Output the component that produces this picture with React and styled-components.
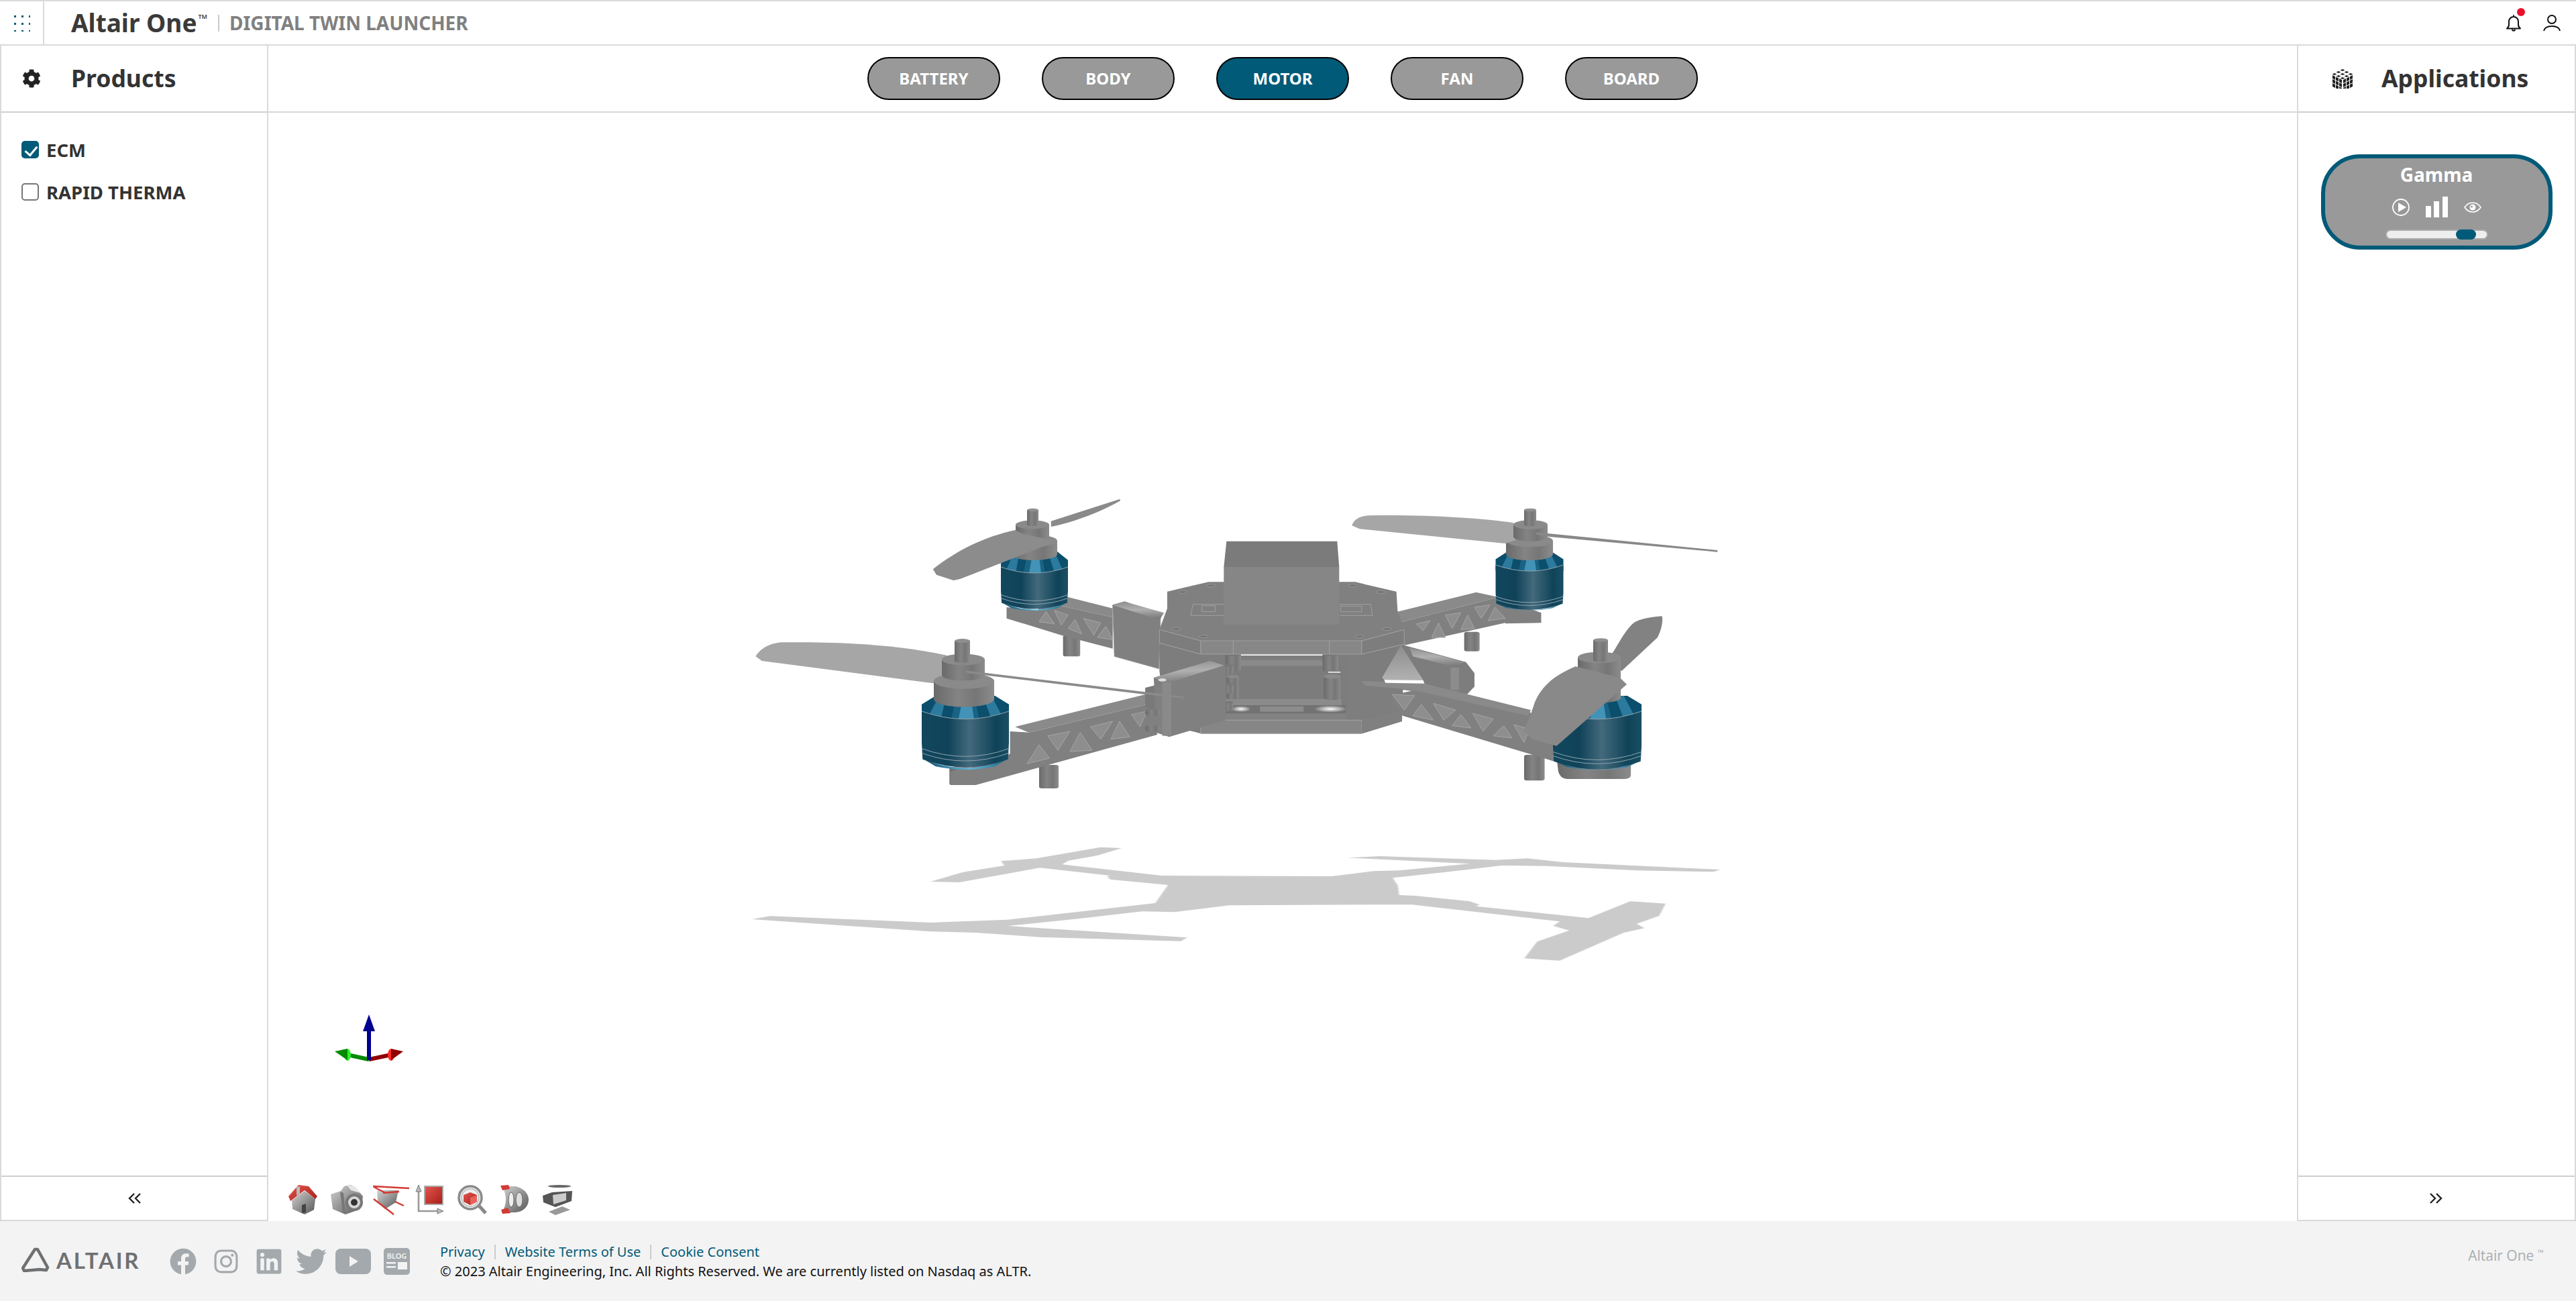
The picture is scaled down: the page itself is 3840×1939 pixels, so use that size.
import React from 'react';
import styled, { createGlobalStyle } from 'styled-components';
import { FaCog, FaFacebook, FaInstagram, FaLinkedin, FaTwitter } from 'react-icons/fa';

const TEAL = '#005a78';
const LINE = '#d8dadc';

const GlobalStyle = createGlobalStyle`
  html, body, #root { margin: 0; height: 100%; }
  body { font-family: "Noto Sans", "Open Sans", sans-serif; color: #333; background: #fff; }
  * { box-sizing: border-box; }
`;

const Page = styled.div`
  display: flex;
  flex-direction: column;
  height: 100vh;
  overflow: hidden;
`;

const TopBar = styled.header`
  display: flex;
  align-items: center;
  height: 68px;
  flex: none;
  border-top: 2px solid ${LINE};
  border-bottom: 2px solid ${LINE};
`;

const GridCell = styled.div`
  width: 66px;
  height: 100%;
  display: flex;
  align-items: center;
  padding-left: 19px;
  border-right: 2px solid ${LINE};
`;

const Brand = styled.div`
  margin-left: 40px;
  font-size: 37px;
  font-weight: 700;
  line-height: 1;
  color: #3a3a3a;
  position: relative;
  top: -1px;
`;

const Tm = styled.sup`
  font-size: 9px;
  font-weight: 600;
  vertical-align: 20px;
  line-height: 0;
  margin-left: 2px;
`;

const BrandRule = styled.div`
  width: 2px;
  height: 25px;
  margin: 0 15px 0 16px;
  background: #c9c9c9;
`;

const AppName = styled.div`
  font-size: 28px;
  font-weight: 700;
  color: #808080;
  white-space: nowrap;
`;

const TopActions = styled.div`
  margin-left: auto;
  display: flex;
  align-items: center;
  gap: 33px;
  padding-right: 23px;
`;

const BellWrap = styled.div`
  position: relative;
  display: flex;
`;

const RedDot = styled.span`
  position: absolute;
  right: -6px;
  top: -10px;
  width: 12px;
  height: 12px;
  border-radius: 50%;
  background: #e8112d;
`;

const Main = styled.main`
  flex: 1;
  display: flex;
  min-height: 0;
`;

const SidePanel = styled.aside`
  flex: none;
  width: ${p => p.$width}px;
  display: flex;
  flex-direction: column;
  border: 2px solid ${LINE};
  border-top: 0;
`;

const PanelHeader = styled.div`
  height: 100px;
  flex: none;
  display: flex;
  align-items: center;
  padding-left: ${p => p.$pad}px;
  border-bottom: 2px solid #cfcfcf;
`;

const PanelIcon = styled.div`
  width: 73px;
  display: flex;
  align-items: center;
  color: #222;
`;

const PanelTitle = styled.h2`
  margin: 0;
  font-size: 35.5px;
  font-weight: 700;
  line-height: 1;
  color: #333;
`;

const PanelBody = styled.div`
  flex: 1;
  display: flex;
  flex-direction: column;
  padding: ${p => p.$top}px 30px 0;
  gap: 37px;
`;

const CheckRow = styled.label`
  display: flex;
  align-items: center;
  height: 26px;
  gap: 11px;
  font-size: 27.5px;
  font-weight: 700;
  color: #333;
`;

const Check = styled.input`
  appearance: none;
  position: relative;
  width: 26px;
  height: 26px;
  margin: 0;
  border: 2px solid #777;
  border-radius: 5px;
  background: #fff;
  &:checked {
    border: 0;
    background: ${TEAL};
  }
  &:checked::after {
    content: '';
    position: absolute;
    left: 9px;
    top: 4px;
    width: 8px;
    height: 15px;
    border: solid #fff;
    border-width: 0 3px 3px 0;
    transform: rotate(40deg);
  }
`;

const PanelFoot = styled.div`
  height: 66px;
  flex: none;
  display: flex;
  align-items: center;
  justify-content: center;
  border-top: 2px solid #cfcfcf;
`;

const Center = styled.section`
  flex: 1;
  min-width: 0;
  display: flex;
  flex-direction: column;
`;

const PartsBar = styled.nav`
  height: 100px;
  flex: none;
  display: flex;
  align-items: center;
  justify-content: center;
  gap: 62px;
  border-bottom: 2px solid #d8d8d8;
`;

const PartButton = styled.button`
  width: 198px;
  height: 64px;
  padding: 0 0 2px;
  border: 2px solid #000;
  border-radius: 32px;
  background: ${p => (p.$active ? TEAL : '#999')};
  color: #fff;
  font-family: inherit;
  font-size: 24px;
  font-weight: 700;
`;

const Viewer = styled.div`
  flex: 1;
  position: relative;
  min-height: 0;
`;

const Scene = styled.svg`
  position: absolute;
  inset: 0;
  width: 100%;
  height: 100%;
`;

const ViewTools = styled.div`
  position: absolute;
  left: 30px;
  bottom: 7px;
  display: flex;
  filter: blur(0.5px);
`;

const ToolIcon = styled.svg`
  width: 63px;
  height: 48px;
  display: block;
`;

const AppCard = styled.div`
  width: 345px;
  height: 142px;
  align-self: center;
  display: flex;
  flex-direction: column;
  align-items: center;
  border: 6px solid ${TEAL};
  border-radius: 58px;
  background: #999;
  padding-top: 5px;
`;

const AppTitle = styled.div`
  font-size: 28px;
  line-height: 38px;
  font-weight: 700;
  color: #fff;
`;

const AppIcons = styled.div`
  display: flex;
  align-items: center;
  gap: 24px;
  height: 31px;
  margin-top: 14px;
`;

const Slider = styled.div`
  position: relative;
  flex: none;
  width: 153px;
  height: 15px;
  margin-top: 18px;
  border: 2px solid #aaa;
  border-radius: 8px;
  background: #eee;
`;

const SliderThumb = styled.div`
  position: absolute;
  left: 103px;
  top: -2px;
  width: 30px;
  height: 15px;
  border-radius: 8px;
  background: ${TEAL};
`;

const Footer = styled.footer`
  height: 119px;
  flex: none;
  display: flex;
  align-items: flex-start;
  padding: 35px 48px 0 32px;
  background: #f3f3f3;
`;

const LogoBlock = styled.div`
  width: 221px;
  display: flex;
  align-items: center;
  gap: 10px;
  margin-top: 4px;
`;

const LogoWord = styled.span`
  font-family: Lato, "Noto Sans", sans-serif;
  font-size: 33px;
  line-height: 36px;
  font-weight: 700;
  letter-spacing: 2.8px;
  color: #6f7072;
`;

const Socials = styled.div`
  display: flex;
  align-items: center;
  width: 403px;
  height: 40px;
  margin-top: 5px;
  color: #a3a9ac;
`;

const SocialSlot = styled.a`
  width: ${p => p.$w}px;
  flex: none;
  display: flex;
  align-items: center;
`;

const LegalBlock = styled.div`
  font-size: 20px;
  line-height: 24px;
  color: #111;
`;

const LinkRow = styled.div`
  display: flex;
  height: 22px;
  margin-bottom: 6px;
`;

const LegalLink = styled.a`
  color: ${TEAL};
  line-height: 22px;
  padding-right: 14px;
  margin-right: 14px;
  border-right: 2px solid #ccc;
  &:last-child { border: 0; margin: 0; padding: 0; }
`;

const Edition = styled.div`
  margin-left: auto;
  margin-top: 1px;
  font-family: "Open Sans", sans-serif;
  font-size: 21px;
  line-height: 30px;
  color: #a9adb0;
`;

const EditionTm = styled.sup`
  font-size: 12px;
  line-height: 0;
`;

function DotsIcon() {
  const at = [2, 13, 24];
  return (
    <svg width="26" height="26" viewBox="0 0 26 26" fill={TEAL}>
      {at.map(y => at.map(x => <rect key={`${x}-${y}`} x={x} y={y} width="3" height="3" />))}
    </svg>
  );
}

function BellIcon() {
  return (
    <svg width="22" height="25" viewBox="0 0 22 25" fill="none" stroke="#111" strokeWidth="2">
      <path d="M1 20.5c2-1.500 3-3 3-6V10a7 7 0 0 1 14 0v4.500c0 3 1 4.500 3 6z" strokeLinejoin="round" />
      <path d="M11 0.500v2.500M9 21.500c0 3 4 3 4 0" />
    </svg>
  );
}

function UserIcon() {
  return (
    <svg width="26" height="25" viewBox="0 0 26 25" fill="none" stroke="#111" strokeWidth="2">
      <circle cx="13" cy="7" r="6" />
      <path d="M1 24c1-4.500 5.500-7 12-7s11 2.500 12 7" />
    </svg>
  );
}

function CubeIcon() {
  const top = [[15, 0], [9, 3], [21, 3], [3, 6], [15, 6], [27, 6], [9, 9], [21, 9], [15, 12]];
  const side = [0, 1, 2].flatMap(c => [0, 1, 2].map(r => [c, r]));
  return (
    <svg width="30" height="29" viewBox="0 0 30 29" fill="#222">
      {top.map(([x, y]) => (
        <polygon key={`${x}-${y}`} points={`${x - 3.500},${y + 1.500} ${x},${y} ${x + 3.500},${y + 1.500} ${x},${y + 3}`} />
      ))}
      {side.map(([c, r]) => (
        <React.Fragment key={`${c}-${r}`}>
          <polygon points={`${c * 5},${9 + c * 2.500 + r * 6} ${c * 5 + 4},${11 + c * 2.500 + r * 6} ${c * 5 + 4},${16 + c * 2.500 + r * 6} ${c * 5},${14 + c * 2.500 + r * 6}`} />
          <polygon points={`${30 - c * 5},${9 + c * 2.500 + r * 6} ${26 - c * 5},${11 + c * 2.500 + r * 6} ${26 - c * 5},${16 + c * 2.500 + r * 6} ${30 - c * 5},${14 + c * 2.500 + r * 6}`} />
        </React.Fragment>
      ))}
    </svg>
  );
}

function DoubleChevron({ dir }) {
  return (
    <svg width="20" height="16" viewBox="0 0 20 16" fill="none" stroke="#222" strokeWidth="2.400">
      <g transform={dir === 'left' ? 'translate(20 0) scale(-1 1)' : undefined}>
        <path d="M1 1l7 7-7 7M10 1l7 7-7 7" />
      </g>
    </svg>
  );
}

function PlayIcon() {
  return (
    <svg width="26" height="26" viewBox="0 0 26 26">
      <circle cx="13" cy="13" r="12" fill="none" stroke="#fff" strokeWidth="1.800" />
      <polygon points="9,6 21,13 9,20" fill="#fff" />
    </svg>
  );
}

function BarsIcon() {
  return (
    <svg width="33" height="31" viewBox="0 0 33 31" fill="#fff">
      <rect x="0" y="14" width="8" height="17" />
      <rect x="12" y="7" width="8" height="24" />
      <rect x="25" y="0" width="8" height="31" />
    </svg>
  );
}

function EyeIcon() {
  return (
    <svg width="26" height="16" viewBox="0 0 26 16">
      <path d="M1 8c3-4.500 7-7 12-7s9 2.500 12 7c-3 4.500-7 7-12 7S4 12.500 1 8z" fill="none" stroke="#fff" strokeWidth="1.600" />
      <circle cx="13" cy="8" r="4.500" fill="#fff" />
      <circle cx="11.500" cy="7" r="1.500" fill="#999" />
    </svg>
  );
}

function AltairMark() {
  return (
    <svg width="42" height="37" viewBox="0 0 42 37" fill="none" stroke="#6f7072" strokeWidth="4.500" strokeLinejoin="round">
      <path d="M20 3l4 0 15 27-2 4-10-1-23 2-2-4z" />
    </svg>
  );
}

function YoutubeIcon() {
  return (
    <svg width="53" height="38" viewBox="0 0 53 38">
      <rect width="53" height="38" rx="8" fill="#a3a9ac" />
      <polygon points="21,11 34,19 21,27" fill="#f3f3f3" />
    </svg>
  );
}

function BlogIcon() {
  return (
    <svg width="39" height="40" viewBox="0 0 39 40">
      <rect width="39" height="40" rx="5" fill="#a3a9ac" />
      <text x="19.500" y="16" textAnchor="middle" fontFamily="Noto Sans" fontWeight="600" fontSize="11" fill="#f3f3f3">BLOG</text>
      <rect x="4" y="21" width="14" height="2.500" fill="#f3f3f3" />
      <rect x="4" y="27" width="14" height="2.500" fill="#f3f3f3" />
      <rect x="21" y="21" width="14" height="11" fill="#f3f3f3" />
    </svg>
  );
}

const HomeTool = () => (
  <ToolIcon viewBox="0 0 63 48">
    <polygon points="5,24 24,10 40,22 38,38 24,45 6,37" fill="url(#tbGray)" />
    <polygon points="20,31 26,29 26,42 20,43" fill="#444" />
    <polygon points="0,18 15,1 30,3 43,18 40,22 24,9 3,25" fill="url(#tbRed)" />
    <polygon points="12,4 17,3 17,14 12,17" fill="#bbb" />
  </ToolIcon>
);

const CameraTool = () => (
  <ToolIcon viewBox="0 0 63 48">
    <polygon points="0,15 15,10 20,3 30,1 38,6 48,18 46,32 36,40 22,45 3,37" fill="url(#tbGray)" />
    <polygon points="14,11 19,13 22,44 18,43" fill="#777" />
    <polygon points="24,1 36,3 44,13 30,9" fill="#e6e6e6" />
    <circle cx="35" cy="27" r="13" fill="#777" />
    <circle cx="35" cy="27" r="9" fill="#d6d6d6" />
    <circle cx="35" cy="27" r="5" fill="#333" />
  </ToolIcon>
);

const CubeTool = () => (
  <ToolIcon viewBox="0 0 63 48">
    <polygon points="6,9 38,9 34,27 18,37 7,27" fill="url(#tbGray)" />
    <g stroke="#d33a34" strokeWidth="2.400">
      <path d="M0 3l54 3M1 4l18 9M15 13l24-2M1 22l30 23M33 26l13 6" />
    </g>
  </ToolIcon>
);

const RectTool = () => (
  <ToolIcon viewBox="0 0 63 48">
    <path d="M5 8v32h32" fill="none" stroke="#999" strokeWidth="2.600" />
    <polygon points="5,1 9,11 1,11" fill="#bbb" stroke="#777" />
    <polygon points="42,40 33,36 33,44" fill="#bbb" stroke="#777" />
    <rect x="14" y="3" width="27" height="27" fill="url(#tbRed)" stroke="#aaa" strokeWidth="2" />
  </ToolIcon>
);

const ZoomTool = () => (
  <ToolIcon viewBox="0 0 63 48">
    <path d="M31 31l11 12" stroke="#888" strokeWidth="5" />
    <circle cx="19" cy="20" r="17" fill="#efefef" stroke="#8a8a8a" strokeWidth="3.500" />
    <circle cx="19" cy="20" r="13" fill="none" stroke="#bbb" strokeWidth="1.500" />
    <polygon points="9,16 19,12 29,16 29,26 19,31 9,26" fill="url(#tbRed)" />
    <polygon points="19,20 29,16 29,26 19,31" fill="#e8625a" />
  </ToolIcon>
);

const WheelTool = () => (
  <ToolIcon viewBox="0 0 63 48">
    <path d="M3 3h20c13 3 20 11 20 20s-7 18-20 19H3c8-12 8-27 0-39z" fill="url(#tbGray)" />
    <ellipse cx="17" cy="23" rx="4" ry="11" fill="#eee" stroke="#666" />
    <ellipse cx="29" cy="23" rx="5" ry="11" fill="#ddd" stroke="#666" />
    <polygon points="1,2 13,1 15,7 4,9" fill="#d33a34" />
    <polygon points="2,38 12,35 16,43 4,44" fill="#d33a34" />
  </ToolIcon>
);

const ExplodeTool = () => (
  <ToolIcon viewBox="0 0 63 48">
    <ellipse cx="26" cy="3" rx="17" ry="2" fill="#666" />
    <polygon points="1,17 15,12 45,10 44,25 20,34 2,27" fill="#555" />
    <polygon points="16,16 36,13 36,24 17,30" fill="#ccc" />
    <polygon points="10,41 30,33 42,38 20,46" fill="#999" />
  </ToolIcon>
);

// cylinder with a lit top, used for shafts, hubs and standoffs
function Cyl({ x1, x2, y1, y2, top = '#8a8a8a' }) {
  const rx = (x2 - x1) / 2;
  const ry = rx * 0.26;
  return (
    <g>
      <path d={`M${x1} ${y1}V${y2}A${rx} ${ry} 0 0 0 ${x2} ${y2}V${y1}z`} fill="url(#cylGrad)" />
      <ellipse cx={(x1 + x2) / 2} cy={y1} rx={rx} ry={ry} fill={top} />
    </g>
  );
}

function Motor({ cx, w, top, bodyTop, ringTop, bot }) {
  const hw = w / 2;
  const c = w * 0.09;
  const ringBot = ringTop + (bot - ringTop) * 0.62;
  const ringLine = ringTop + (ringBot - ringTop) * 0.35;
  const ringLine2 = ringTop + (ringBot - ringTop) * 0.62;
  return (
    <g>
      <path d={`M${cx - w * 0.34} ${top}H${cx + w * 0.34}L${cx + hw} ${top + (bodyTop - top) * 0.55}V${bodyTop + c}H${cx - hw}V${top + (bodyTop - top) * 0.55}z`} fill="#0c4f6d" />
      <polygon points={`${cx - w * 0.1},${top} ${cx + w * 0.1},${top} ${cx + w * 0.16},${bodyTop + c} ${cx - w * 0.16},${bodyTop + c}`} fill="#1a6384" />
      <polygon points={`${cx - w * 0.02},${top} ${cx + w * 0.06},${top} ${cx + w * 0.1},${bodyTop + c} ${cx - w * 0.08},${bodyTop + c}`} fill="#5db4d8" opacity="0.6" />
      <polygon points={`${cx + w * 0.2},${top} ${cx + w * 0.3},${top} ${cx + w * 0.44},${bodyTop + c} ${cx + w * 0.3},${bodyTop + c}`} fill="#2c7a9e" />
      <polygon points={`${cx - w * 0.3},${top} ${cx - w * 0.22},${top} ${cx - w * 0.28},${bodyTop + c} ${cx - w * 0.44},${bodyTop + c}`} fill="#2c7a9e" />
      <path d={`M${cx - hw * 0.95} ${ringBot}Q${cx} ${ringBot + c * 2.200} ${cx + hw * 0.95} ${ringBot}L${cx + w * 0.34} ${bot - c * 0.4}Q${cx} ${bot + c * 0.4} ${cx - w * 0.34} ${bot - c * 0.4}z`} fill="url(#chamferGrad)" />
      <path d={`M${cx - hw} ${bodyTop}Q${cx} ${bodyTop + c * 2} ${cx + hw} ${bodyTop}V${ringTop}L${cx + hw * 0.98} ${ringBot}Q${cx} ${ringBot + c * 2} ${cx - hw * 0.98} ${ringBot}L${cx - hw} ${ringTop}z`} fill="url(#motorGrad)" />
      <g fill="none" stroke="#8fa4ad" strokeWidth="1">
        <path d={`M${cx - hw} ${bodyTop}Q${cx} ${bodyTop + c * 2} ${cx + hw} ${bodyTop}`} />
        <path d={`M${cx - hw} ${ringLine}Q${cx} ${ringLine + c * 2} ${cx + hw} ${ringLine}`} />
        <path d={`M${cx - hw} ${ringLine2}Q${cx} ${ringLine2 + c * 2} ${cx + hw} ${ringLine2}`} />
      </g>
    </g>
  );
}

function Tris({ list, fill = '#8e8e8e' }) {
  return (
    <g fill={fill} stroke="#a6a6a6" strokeWidth="1">
      {list.map(points => <polygon key={points} points={points} vectorEffect="non-scaling-stroke" />)}
    </g>
  );
}

const Z6 = ({ children }) => <g transform="translate(1100 720) scale(0.5102 0.3333)">{children}</g>;
const Z7 = ({ children }) => <g transform="translate(1800 720) scale(0.5102 0.3333)">{children}</g>;
const Z12 = ({ children }) => <g transform="translate(1700 860) scale(0.3333)">{children}</g>;

const SHADOW = '300,222 350,180 415,150 410,130 465,118 565,68 598,72 560,105 515,128 505,145 660,195 925,198 990,175 1030,172 1140,142 950,115 1000,108 1180,125 1230,118 1285,135 1530,168 1520,178 1400,172 1260,152 1190,150 1100,180 1020,205 1028,240 1030,282 1055,285 1140,310 1155,325 1150,332 1325,385 1390,310 1445,320 1435,375 1400,410 1412,430 1380,450 1280,575 1225,565 1245,490 1295,440 1270,420 1280,400 1050,325 985,325 765,328 680,358 630,355 530,388 420,420 700,472 690,488 470,470 370,450 300,445 22,390 50,376 300,405 420,392 650,318 670,237 580,212 575,198 580,195 470,160 345,225';

function Drone() {
  return (
    <g>
      {/* shadow on the floor */}
      <g transform="translate(1100 1240) scale(0.957 0.3333)" filter="url(#soft)">
        <polygon points={SHADOW} fill="#cbcbcb" />
      </g>

      {/* rear left arm */}
      <Z6>
        <rect x="950" y="680" width="50" height="95" rx="8" fill="url(#cylGrad)" />
        <polygon points="890,530 965,510 1095,560 1095,600" fill="#8a8a8a" />
        <polygon points="890,530 1095,600 1095,740 945,680 785,605 785,555 875,570" fill="#808080" />
        <Tris list={['900,575 925,630 880,620', '925,570 965,590 945,635', '985,610 1005,675 965,650', '1010,605 1060,625 1040,680', '1075,640 1095,700 1050,690']} />
      </Z6>
      <Motor cx={1542} w={100} top={822} bodyTop={845} ringTop={880} bot={910} />
      <Cyl x1={1507} x2={1576} y1={806} y2={826} />
      <Z6>
        <path d="M915 170L1115 72 1118 78C1060 130 980 175 915 195z" fill="#8a8a8a" />
      </Z6>
      <Cyl x1={1514} x2={1564} y1={782} y2={800} />
      <Cyl x1={1531} x2={1548} y1={760} y2={782} top="#8f8f8f" />
      <Z6>
        <path d="M810 210C720 240 640 300 570 385L580 410 630 435 650 428 915 270 900 250 830 225z" fill="#8c8c8c" />
      </Z6>

      {/* rear right arm */}
      <Z7>
        <rect x="750" y="665" width="45" height="87" rx="8" fill="url(#cylGrad)" />
        <polygon points="850,510 975,580 975,625 870,628" fill="#808080" />
        <polygon points="555,575 785,488 850,510 565,622" fill="#8a8a8a" />
        <polygon points="565,622 850,510 860,560 870,625 575,725" fill="#808080" />
        <Tris list={['610,630 650,615 630,660', '675,625 695,690 655,690', '695,590 740,580 715,650', '760,590 780,650 740,655', '780,555 825,545 800,605', '840,555 870,605 820,615']} />
      </Z7>
      <Motor cx={2280} w={101} top={823} bodyTop={842} ringTop={883} bot={910} />
      <Cyl x1={2245} x2={2315} y1={806} y2={826} />
      <Z7>
        <path d="M895 178C800 155 620 140 470 145 440 148 425 170 422 190L445 205 870 270 900 255z" fill="#a6a6a6" />
      </Z7>
      <Cyl x1={2256} x2={2307} y1={782} y2={800} />
      <Cyl x1={2272} x2={2290} y1={760} y2={782} top="#8f8f8f" />
      <Z7>
        <polygon points="960,220 1490,300 1490,308 1000,240 960,230" fill="#888" />
      </Z7>

      {/* rear left connector */}
      <Z6>
        <polygon points="1095,545 1130,530 1235,590 1230,830 1100,775" fill="#808080" stroke="#999" vectorEffect="non-scaling-stroke" />
        <polygon points="1095,545 1130,530 1245,580 1232,612" fill="url(#bandGrad)" />
      </Z6>

      {/* central frame */}
      <Z12>
        <polygon points="85,295 270,345 270,700 120,660 85,420" fill="#7d7d7d" />
        <polygon points="990,345 1180,300 1170,645 990,700" fill="#7e7e7e" />
        <polygon points="270,345 990,345 990,700 270,700" fill="#7d7d7d" />
        <rect x="450" y="345" width="365" height="6" fill="#fff" />
        <rect x="450" y="351" width="365" height="25" fill="#7d7d7d" />
        <rect x="450" y="372" width="365" height="26" fill="#8a8a8a" />
        <rect x="380" y="398" width="520" height="150" fill="#7c7c7c" />
        <rect x="380" y="545" width="520" height="28" fill="#8b8b8b" />
        <rect x="380" y="573" width="540" height="38" fill="#727272" />
        <polygon points="380,610 920,610 935,640 380,640" fill="#828282" />
        <ellipse cx="450" cy="590" rx="42" ry="13" fill="url(#glint)" />
        <ellipse cx="850" cy="590" rx="70" ry="15" fill="url(#glint)" />
        <rect x="535" y="578" width="195" height="24" fill="#8c8c8c" />
        <rect x="920" y="345" width="70" height="295" fill="#7e7e7e" />
        <polygon points="270,640 990,640 990,700 270,700" fill="#868686" stroke="#a3a3a3" vectorEffect="non-scaling-stroke" />
        <polygon points="990,640 1160,600 1170,645 990,700" fill="#808080" />
        <Cyl x1={380} x2={450} y1={345} y2={415} top="#777" />
        <Cyl x1={815} x2={885} y1={345} y2={415} top="#777" />
        <Cyl x1={385} x2={440} y1={445} y2={540} />
        <Cyl x1={820} x2={895} y1={445} y2={540} />
        <rect x="840" y="423" width="55" height="5" fill="#eee" />
        <polygon points="120,65 305,22 960,22 1145,65 1150,150 1180,235 990,285 270,285 85,235 120,140" fill="#808080" />
        <polygon points="85,235 270,285 270,345 85,295" fill="#7d7d7d" stroke="#a0a0a0" vectorEffect="non-scaling-stroke" />
        <polygon points="270,285 990,285 990,345 270,345" fill="#878787" stroke="#a0a0a0" vectorEffect="non-scaling-stroke" />
        <polygon points="990,285 1180,235 1180,300 990,345" fill="#7d7d7d" stroke="#a0a0a0" vectorEffect="non-scaling-stroke" />
        <g fill="none" stroke="#a0a0a0">
          <path d="M235 122H375M225 172H375M235 122L225 172M890 122H1030L1038 172H890" vectorEffect="non-scaling-stroke" />
          <path d="M275 128H335V155H275zM895 130H990V155H895z" vectorEffect="non-scaling-stroke" />
          <path d="M415 285V345M845 285V345" vectorEffect="non-scaling-stroke" />
        </g>
        <g fill="#727272" stroke="#9a9a9a">
          {[[315, 38], [190, 67], [950, 38], [1075, 67], [160, 232], [283, 266], [980, 266], [1103, 232]].map(([x, y]) => (
            <ellipse key={x} cx={x} cy={y} rx="20" ry="6" vectorEffect="non-scaling-stroke" />
          ))}
        </g>
        <polygon points="385,-160 880,-160 889,-45 373,-45" fill="#7b7b7b" />
        <polygon points="373,-45 889,-45 889,212 373,212" fill="#868686" />
      </Z12>

      {/* front right arm and its connector */}
      <Z7>
        <polygon points="450,770 575,725 755,800 780,850 780,910 755,950 600,930 450,900" fill="#7d7d7d" />
        <polygon points="590,735 750,800 730,825 600,775" fill="url(#bandGrad)" />
        <rect x="710" y="825" width="25" height="100" fill="#8c8c8c" />
        <rect x="925" y="1215" width="60" height="115" rx="8" fill="url(#cylGrad)" />
        <polygon points="530,950 610,925 940,1020 1020,1170 1025,1250 950,1215 570,1040" fill="#808080" />
        <polygon points="450,885 630,895 945,1015 935,1040 600,925 460,905" fill="#8a8a8a" />
        <Tris list={['540,945 605,950 575,1015', '625,990 660,1060 600,1040', '660,985 725,1015 690,1060', '740,1035 770,1095 715,1085', '775,1030 835,1055 805,1110', '865,1085 890,1140 835,1130', '895,1080 940,1100 925,1160']} />
        <path d="M1020 1225H1237V1305Q1237 1323 1215 1323H1050Q1030 1320 1025 1290z" fill="url(#cylGrad)" />
        <polygon points="565,725 510,870 520,885 632,885" fill="url(#triGrad)" />
        <polygon points="516,880 630,882 634,896 520,893" fill="#fff" />
      </Z7>
      <Motor cx={2381} w={132} top={1037} bodyTop={1060} ringTop={1113} bot={1148} />
      <Z7>
        <path d="M1170 790C1195 740 1220 650 1250 620 1280 600 1310 597 1328 595 1332 620 1325 660 1315 690L1210 840z" fill="#828282" />
      </Z7>
      <Cyl x1={2362} x2={2416} y1={1000} y2={1040} />
      <Cyl x1={2352} x2={2416} y1={980} y2={1004} />
      <Cyl x1={2375} x2={2397} y1={954} y2={984} top="#8f8f8f" />
      <Z7>
        <path d="M1075 820C1030 850 980 890 955 985 945 1040 930 1080 925 1110L950 1145 1020 1175 1225 900 1205 870z" fill="#898989" />
      </Z7>

      {/* front left arm and connector */}
      <Z6>
        <rect x="880" y="1260" width="57" height="105" rx="8" fill="url(#cylGrad)" />
        <rect x="618" y="1270" width="77" height="80" rx="8" fill="url(#cylGrad)" />
        <polygon points="795,1110 850,1115 1220,980 1225,1125 695,1350 620,1350 620,1290 750,1250 795,1210" fill="#808080" />
        <polygon points="810,1090 1190,945 1220,980 850,1115" fill="#8a8a8a" />
        <Tris list={['905,1130 970,1110 935,1195', '1000,1115 1035,1195 970,1200', '1030,1090 1095,1065 1060,1145', '1115,1065 1145,1135 1090,1145', '1150,1035 1195,1020 1175,1090', '880,1170 910,1230 845,1255']} />
        <path d="M130 712C300 710 460 720 610 770L610 880 570 895 70 795 52 775C62 745 90 715 130 712z" fill="#a6a6a6" />
      </Z6>
      <Motor cx={1439} w={130} top={1037} bodyTop={1060} ringTop={1107} bot={1147} />
      <Cyl x1={1392} x2={1482} y1={1015} y2={1042} />
      <Cyl x1={1404} x2={1468} y1={983} y2={1006} />
      <Cyl x1={1423} x2={1446} y1={955} y2={985} top="#8f8f8f" />
      <Z12>
        <Cyl x1={375} x2={415} y1={395} y2={430} top="#777" />
        <Cyl x1={375} x2={415} y1={480} y2={515} top="#777" />
        <Cyl x1={375} x2={415} y1={560} y2={595} top="#777" />
      </Z12>
      <Z6>
        <polygon points="1190,915 1230,900 1230,1040 1190,1000" fill="#797979" />
        <polygon points="1215,870 1380,795 1425,820 1425,1060 1260,1135 1222,1115" fill="#808080" />
        <polygon points="1215,870 1380,795 1420,815 1255,895" fill="url(#bandGrad)" />
        <rect x="1240" y="890" width="26" height="240" fill="#8a8a8a" />
        <ellipse cx="1240" cy="880" rx="12" ry="7" fill="#ddd" />
        <rect x="1190" y="1012" width="45" height="28" rx="12" fill="url(#cylGrad)" />
        <rect x="1190" y="1082" width="45" height="30" rx="12" fill="url(#cylGrad)" />
        <polygon points="665,838 1305,955 1300,962 1190,945 670,850" fill="#8a8a8a" />
      </Z6>

      {/* axis triad */}
      <path d="M550 1579l-32-7" stroke="#008a00" strokeWidth="6" />
      <ellipse cx="518" cy="1572" rx="5" ry="9" fill="#2cf02c" />
      <polygon points="499,1567 518,1563 518,1580" fill="#008a00" />
      <path d="M550 1579l33-7" stroke="#8f0000" strokeWidth="6" />
      <ellipse cx="583" cy="1572" rx="5" ry="9" fill="#ff2a2a" />
      <polygon points="601,1567 583,1563 583,1580" fill="#8f0000" />
      <path d="M550 1537v43" stroke="#00008f" strokeWidth="6" />
      <polygon points="550,1512 541,1537 559,1537" fill="#00008f" />
    </g>
  );
}

function SceneDefs() {
  return (
    <defs>
      <filter id="soft"><feGaussianBlur stdDeviation="1.200" /></filter>
      <linearGradient id="cylGrad">
        <stop offset="0" stopColor="#6a6a6a" />
        <stop offset="0.4" stopColor="#848484" />
        <stop offset="0.7" stopColor="#767676" />
        <stop offset="1" stopColor="#8c8c8c" />
      </linearGradient>
      <linearGradient id="motorGrad">
        <stop offset="0" stopColor="#11475e" />
        <stop offset="0.3" stopColor="#104359" />
        <stop offset="0.55" stopColor="#43697c" />
        <stop offset="0.85" stopColor="#0f4358" />
        <stop offset="1" stopColor="#1a4f66" />
      </linearGradient>
      <linearGradient id="chamferGrad">
        <stop offset="0" stopColor="#0f4d6a" />
        <stop offset="0.55" stopColor="#63bbdf" />
        <stop offset="1" stopColor="#1a6486" />
      </linearGradient>
      <linearGradient id="bandGrad" x1="0" y1="0" x2="0.15" y2="1">
        <stop offset="0" stopColor="#8d8d8d" />
        <stop offset="0.5" stopColor="#b0b0b0" />
        <stop offset="1" stopColor="#7c7c7c" />
      </linearGradient>
      <linearGradient id="triGrad" x1="0" y1="0" x2="0" y2="1">
        <stop offset="0" stopColor="#8d8d8d" />
        <stop offset="1" stopColor="#b2b2b2" />
      </linearGradient>
      <radialGradient id="glint">
        <stop offset="0" stopColor="#fff" />
        <stop offset="1" stopColor="#7a7a7a" />
      </radialGradient>
      <linearGradient id="tbGray" x1="0" y1="0" x2="1" y2="1">
        <stop offset="0" stopColor="#d4d4d4" />
        <stop offset="1" stopColor="#555" />
      </linearGradient>
      <linearGradient id="tbRed" x1="0" y1="0" x2="1" y2="1">
        <stop offset="0" stopColor="#e2584f" />
        <stop offset="1" stopColor="#a71d17" />
      </linearGradient>
    </defs>
  );
}

const PARTS = ['BATTERY', 'BODY', 'MOTOR', 'FAN', 'BOARD'];

export default function App() {
  return (
    <Page>
      <GlobalStyle />
      <TopBar>
        <GridCell><DotsIcon /></GridCell>
        <Brand>Altair One<Tm>TM</Tm></Brand>
        <BrandRule />
        <AppName>DIGITAL TWIN LAUNCHER</AppName>
        <TopActions>
          <BellWrap><BellIcon /><RedDot /></BellWrap>
          <UserIcon />
        </TopActions>
      </TopBar>

      <Main>
        <SidePanel $width={400}>
          <PanelHeader $pad={31}>
            <PanelIcon><FaCog size={28} /></PanelIcon>
            <PanelTitle>Products</PanelTitle>
          </PanelHeader>
          <PanelBody $top={42}>
            <CheckRow><Check type="checkbox" defaultChecked />ECM</CheckRow>
            <CheckRow><Check type="checkbox" />RAPID THERMA</CheckRow>
          </PanelBody>
          <PanelFoot><DoubleChevron dir="left" /></PanelFoot>
        </SidePanel>

        <Center>
          <PartsBar>
            {PARTS.map(part => (
              <PartButton key={part} $active={part === 'MOTOR'}>{part}</PartButton>
            ))}
          </PartsBar>
          <Viewer>
            <Scene viewBox="400 168 3024 1652">
              <SceneDefs />
              <Drone />
            </Scene>
            <ViewTools>
              <HomeTool />
              <CameraTool />
              <CubeTool />
              <RectTool />
              <ZoomTool />
              <WheelTool />
              <ExplodeTool />
            </ViewTools>
          </Viewer>
        </Center>

        <SidePanel $width={416}>
          <PanelHeader $pad={51}>
            <PanelIcon><CubeIcon /></PanelIcon>
            <PanelTitle>Applications</PanelTitle>
          </PanelHeader>
          <PanelBody $top={62}>
            <AppCard>
              <AppTitle>Gamma</AppTitle>
              <AppIcons>
                <PlayIcon />
                <BarsIcon />
                <EyeIcon />
              </AppIcons>
              <Slider><SliderThumb /></Slider>
            </AppCard>
          </PanelBody>
          <PanelFoot><DoubleChevron dir="right" /></PanelFoot>
        </SidePanel>
      </Main>

      <Footer>
        <LogoBlock>
          <AltairMark />
          <LogoWord>ALTAIR</LogoWord>
        </LogoBlock>
        <Socials>
          <SocialSlot $w={64}><FaFacebook size={40} /></SocialSlot>
          <SocialSlot $w={63}><FaInstagram size={40} /></SocialSlot>
          <SocialSlot $w={61}><FaLinkedin size={42} /></SocialSlot>
          <SocialSlot $w={59}><FaTwitter size={46} /></SocialSlot>
          <SocialSlot $w={72}><YoutubeIcon /></SocialSlot>
          <SocialSlot $w={39}><BlogIcon /></SocialSlot>
        </Socials>
        <LegalBlock>
          <LinkRow>
            <LegalLink>Privacy</LegalLink>
            <LegalLink>Website Terms of Use</LegalLink>
            <LegalLink>Cookie Consent</LegalLink>
          </LinkRow>
          © 2023 Altair Engineering, Inc. All Rights Reserved. We are currently listed on Nasdaq as ALTR.
        </LegalBlock>
        <Edition>Altair One <EditionTm>™</EditionTm></Edition>
      </Footer>
    </Page>
  );
}
